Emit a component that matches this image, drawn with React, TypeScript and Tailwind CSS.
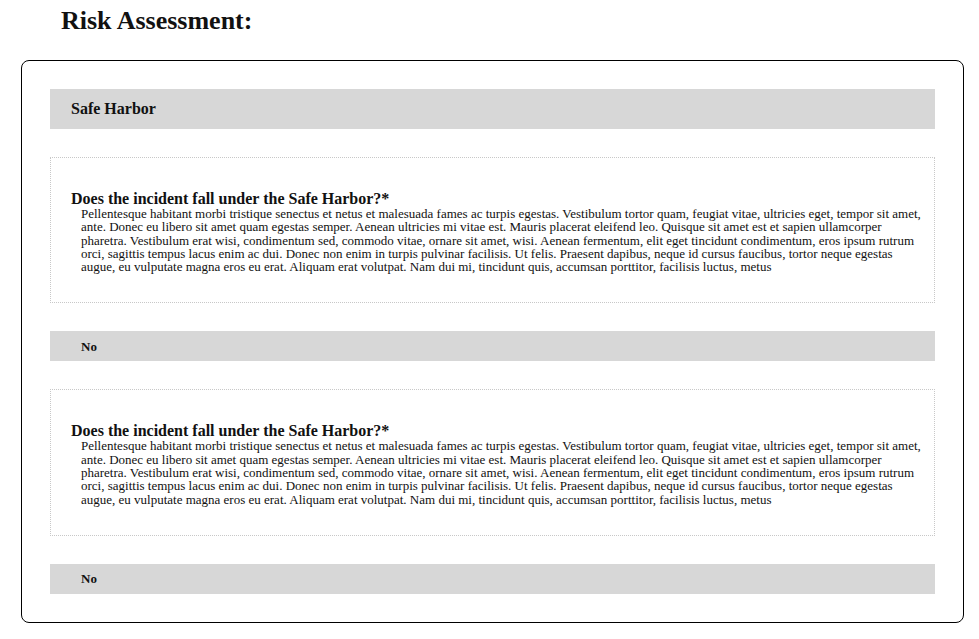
const LOREM =
  "Pellentesque habitant morbi tristique senectus et netus et malesuada fames ac turpis egestas. Vestibulum tortor quam, feugiat vitae, ultricies eget, tempor sit amet, ante. Donec eu libero sit amet quam egestas semper. Aenean ultricies mi vitae est. Mauris placerat eleifend leo. Quisque sit amet est et sapien ullamcorper pharetra. Vestibulum erat wisi, condimentum sed, commodo vitae, ornare sit amet, wisi. Aenean fermentum, elit eget tincidunt condimentum, eros ipsum rutrum orci, sagittis tempus lacus enim ac dui. Donec non enim in turpis pulvinar facilisis. Ut felis. Praesent dapibus, neque id cursus faucibus, tortor neque egestas augue, eu vulputate magna eros eu erat. Aliquam erat volutpat. Nam dui mi, tincidunt quis, accumsan porttitor, facilisis luctus, metus";

function Question() {
  return (
    <div className="border border-dotted border-[#c8c8c8] pl-[20px] pr-[10px] pt-[32px] pb-[29px]">
      <h3 className="text-[16px] leading-[17px] font-bold">
        Does the incident fall under the Safe Harbor?*
      </h3>
      <p className="ml-[10px] text-[13px] leading-[13.3px]">{LOREM}</p>
    </div>
  );
}

function Answer({ value }: { value: string }) {
  return (
    <div className="flex h-[30px] items-center bg-[#d7d7d7] pl-[31px] text-[13px] font-bold">
      {value}
    </div>
  );
}

export default function App() {
  return (
    <div
      className="min-h-screen bg-white pb-[16px] text-[#111]"
      style={{ fontFamily: '"Liberation Serif", "Times New Roman", serif' }}
    >
      <h1 className="pl-[61px] pt-[6px] text-[26px] leading-[30px] font-bold">
        Risk Assessment:
      </h1>

      <div className="ml-[21px] mt-[24px] flex w-[943px] flex-col gap-[28px] rounded-lg border border-black p-[28px]">
        {/* Section header */}
        <div className="flex h-[40px] items-center bg-[#d7d7d7] px-[21px] text-[16px] font-bold">
          Safe Harbor
        </div>

        <Question />
        <Answer value="No" />

        <Question />
        <Answer value="No" />
      </div>
    </div>
  );
}
